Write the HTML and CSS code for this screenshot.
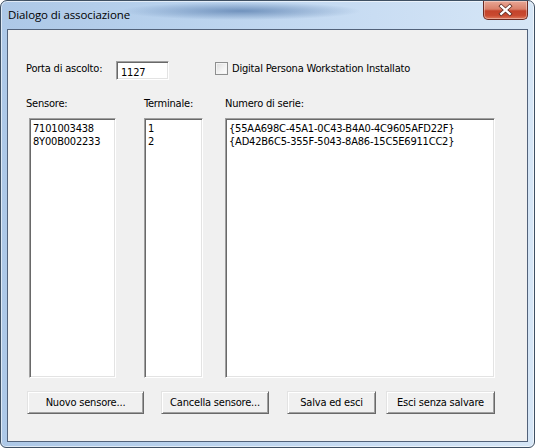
FILE: index.html
```html
<!DOCTYPE html>
<html>
<head>
<meta charset="utf-8">
<link rel="stylesheet" href="styles.css">
</head>
<body>
<div class="window">
  <div class="titlebar">
    <span class="title">Dialogo di associazione</span>
    <div class="close">
      <svg width="45" height="18" viewBox="0 0 45 18">
        <path d="M18 5 L27 13 M27 5 L18 13" stroke="#5a2a20" stroke-width="4" stroke-linecap="square"/>
        <path d="M18 5 L27 13 M27 5 L18 13" stroke="#ffffff" stroke-width="2.4" stroke-linecap="square"/>
      </svg>
    </div>
  </div>
  <div class="client">
    <div class="row-port">
      <span class="lbl-port">Porta di ascolto:</span>
      <div class="edit">1127</div>
      <div class="check"><span class="box"></span><span>Digital Persona Workstation Installato</span></div>
    </div>
    <div class="lists">
      <div class="col col-sensore">
        <div class="lbl">Sensore:</div>
        <div class="listbox lb-sensore">
          <div>7101003438</div>
          <div>8Y00B002233</div>
        </div>
      </div>
      <div class="col col-term">
        <div class="lbl">Terminale:</div>
        <div class="listbox lb-term">
          <div>1</div>
          <div>2</div>
        </div>
      </div>
      <div class="col col-num">
        <div class="lbl">Numero di serie:</div>
        <div class="listbox lb-num">
          <div>{55AA698C-45A1-0C43-B4A0-4C9605AFD22F}</div>
          <div>{AD42B6C5-355F-5043-8A86-15C5E6911CC2}</div>
        </div>
      </div>
    </div>
    <div class="buttons">
      <div class="btn b1">Nuovo sensore...</div>
      <div class="btn b2">Cancella sensore...</div>
      <div class="btn b3">Salva ed esci</div>
      <div class="btn b4">Esci senza salvare</div>
    </div>
  </div>
</div>
</body>
</html>
```
FILE: styles.css
```css
* { box-sizing: border-box; }
html, body { margin: 0; padding: 0; background: #ffffff; }
.window {
  width: 535px;
  height: 448px;
  border: 1px solid #3f5063;
  border-radius: 7px 7px 6px 6px;
  background:
    radial-gradient(ellipse 120px 9px at 240px 10px, rgba(80,118,168,0.7), rgba(80,118,168,0) 100%),
    linear-gradient(90deg, #adc8e7 0%, #b9d2ed 35%, #c9ddf3 70%, #d6e6f6 100%);
  display: flex;
  flex-direction: column;
  padding: 0 6px 5px 6px;
  box-shadow: inset 0 0 0 1px rgba(255,255,255,0.6);
}
.titlebar {
  height: 28px;
  display: flex;
  align-items: flex-start;
  font-family: "Open Sans", "Liberation Sans", sans-serif;
  font-size: 11.5px;
  color: #000;
}
.title {
  margin-top: 6px;
  margin-left: 1px;
  letter-spacing: -0.1px;
}
.close {
  margin-left: auto;
  width: 45px;
  height: 19px;
  border: 1px solid #6b2a22;
  border-top: none;
  border-radius: 0 0 5px 5px;
  background: linear-gradient(180deg, #e8a795 0%, #d9806a 45%, #c4432a 55%, #c94a30 80%, #e07a5c 100%);
  box-shadow: inset 0 0 0 1px rgba(255,255,255,0.35);
  display: flex;
}
.client {
  flex: 1;
  border: 1px solid #52627a;
  background: #f0f0f0;
  font-family: "DejaVu Sans Condensed", "DejaVu Sans", sans-serif;
  font-size: 11px;
  letter-spacing: -0.2px;
  color: #000;
  padding: 31px 0 0 0;
  display: flex;
  flex-direction: column;
}
.row-port {
  display: flex;
  align-items: center;
  height: 19px;
}
.lbl-port {
  margin-left: 18px;
  width: 90px;
  margin-top: -4px;
}
.edit {
  width: 53px;
  height: 19px;
  background: #fff;
  border: 1px solid;
  border-color: #a0a0a0 #ffffff #ffffff #a0a0a0;
  box-shadow: inset 1px 1px 0 #696969, inset -1px -1px 0 #e3e3e3;
  padding: 4px 0 0 4px;
  line-height: 13px;
}
.check {
  margin-left: 46px;
  display: flex;
  align-items: center;
  margin-top: -4px;
}
.box {
  width: 13px;
  height: 13px;
  border: 1px solid #8e8f8f;
  background: linear-gradient(135deg, #dcdcdc 0%, #f4f4f4 60%, #ffffff 100%);
  box-shadow: inset 0 0 0 1px #f4f4f4;
  margin-right: 4px;
}
.lists {
  display: flex;
  margin-top: 17px;
}
.col {
  display: flex;
  flex-direction: column;
}
.lbl {
  height: 21px;
  line-height: 13px;
}
.col-sensore { margin-left: 18px; }
.col-term { margin-left: 28px; }
.col-num { margin-left: 22px; }
.listbox {
  height: 260px;
  background: #fff;
  border: 1px solid;
  border-color: #a0a0a0 #ffffff #ffffff #a0a0a0;
  box-shadow: inset 1px 1px 0 #696969, inset -1px -1px 0 #e3e3e3;
  padding: 3px 0 0 3px;
  line-height: 13px;
}
.lb-sensore { width: 87px; margin-left: 3px; }
.lb-term { width: 59px; }
.lb-num { width: 270px; }
.buttons {
  display: flex;
  margin-top: 13px;
}
.btn {
  height: 23px;
  background: #f0f0f0;
  border: 1px solid;
  border-color: #e3e3e3 #696969 #696969 #e3e3e3;
  box-shadow: inset 1px 1px 0 #ffffff, inset -1px -1px 0 #a0a0a0;
  display: flex;
  align-items: center;
  justify-content: center;
  line-height: 13px;
}
.b1 { width: 117px; margin-left: 19px; }
.b2 { width: 108px; margin-left: 17px; }
.b3 { width: 89px; margin-left: 18px; }
.b4 { width: 109px; margin-left: 10px; }
```
